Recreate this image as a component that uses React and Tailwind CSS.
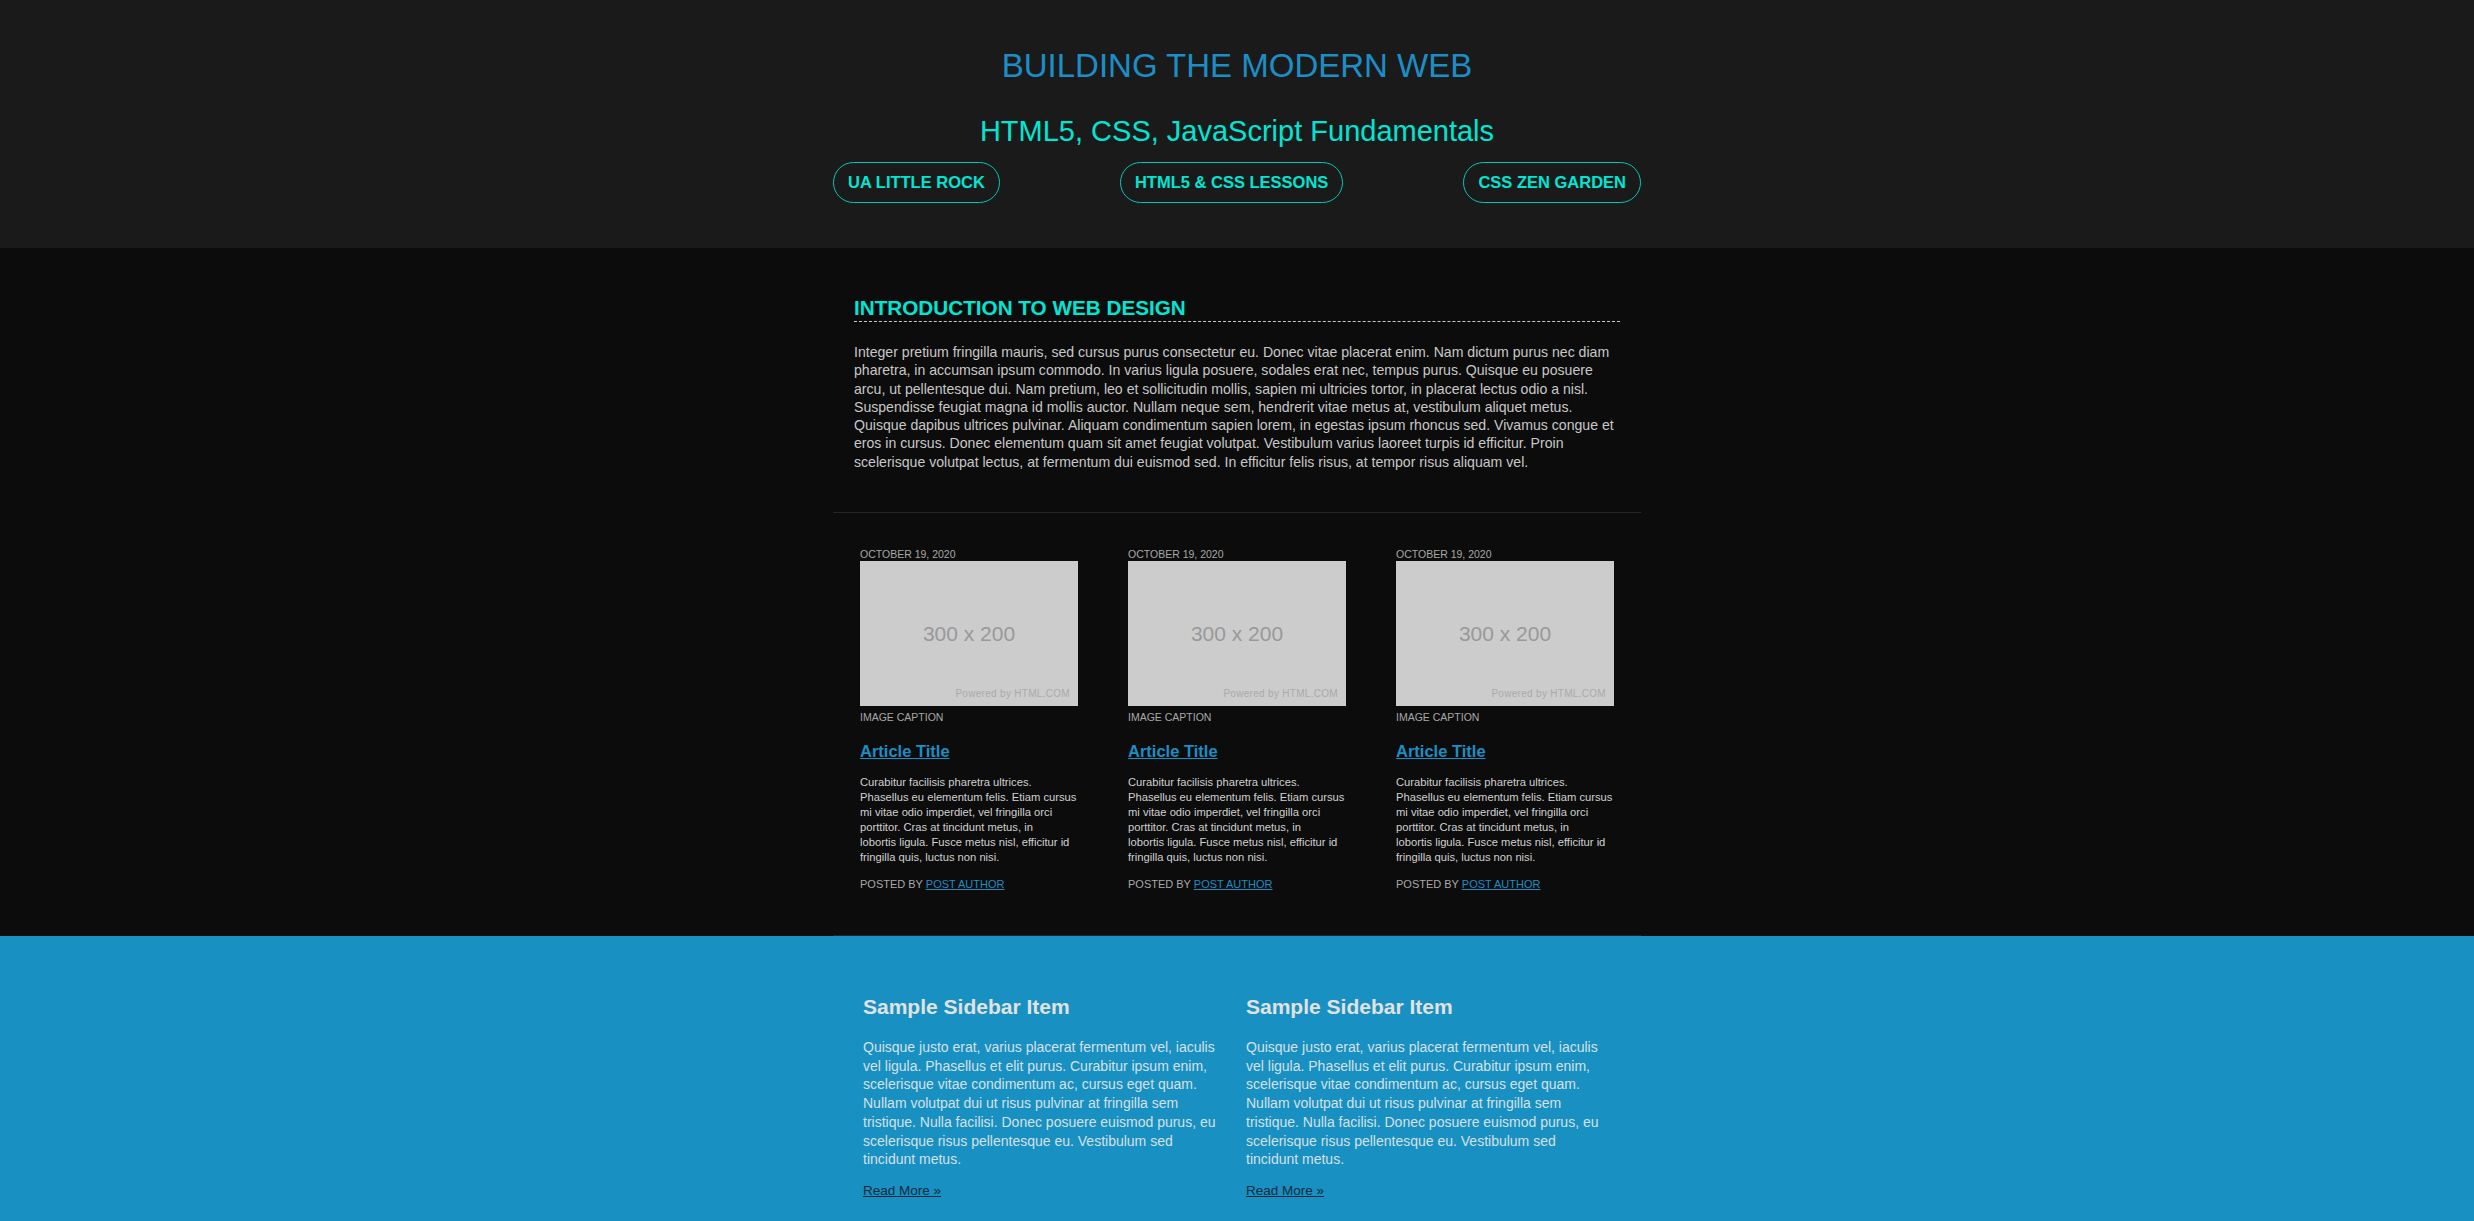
import React from 'react';

// line breaks follow the reference
const intro = [
  'Integer pretium fringilla mauris, sed cursus purus consectetur eu. Donec vitae placerat enim. Nam dictum purus nec diam',
  'pharetra, in accumsan ipsum commodo. In varius ligula posuere, sodales erat nec, tempus purus. Quisque eu posuere',
  'arcu, ut pellentesque dui. Nam pretium, leo et sollicitudin mollis, sapien mi ultricies tortor, in placerat lectus odio a nisl.',
  'Suspendisse feugiat magna id mollis auctor. Nullam neque sem, hendrerit vitae metus at, vestibulum aliquet metus.',
  'Quisque dapibus ultrices pulvinar. Aliquam condimentum sapien lorem, in egestas ipsum rhoncus sed. Vivamus congue et',
  'eros in cursus. Donec elementum quam sit amet feugiat volutpat. Vestibulum varius laoreet turpis id efficitur. Proin',
  'scelerisque volutpat lectus, at fermentum dui euismod sed. In efficitur felis risus, at tempor risus aliquam vel.',
];

const articleBody = [
  'Curabitur facilisis pharetra ultrices.',
  'Phasellus eu elementum felis. Etiam cursus',
  'mi vitae odio imperdiet, vel fringilla orci',
  'porttitor. Cras at tincidunt metus, in',
  'lobortis ligula. Fusce metus nisl, efficitur id',
  'fringilla quis, luctus non nisi.',
];

const sidebarBody = [
  'Quisque justo erat, varius placerat fermentum vel, iaculis',
  'vel ligula. Phasellus et elit purus. Curabitur ipsum enim,',
  'scelerisque vitae condimentum ac, cursus eget quam.',
  'Nullam volutpat dui ut risus pulvinar at fringilla sem',
  'tristique. Nulla facilisi. Donec posuere euismod purus, eu',
  'scelerisque risus pellentesque eu. Vestibulum sed',
  'tincidunt metus.',
];

const navLinks = ['UA LITTLE ROCK', 'HTML5 & CSS LESSONS', 'CSS ZEN GARDEN'];

const Lines = ({ lines }) =>
  lines.map((l, i) => (
    <React.Fragment key={i}>
      {l}
      {i < lines.length - 1 && <br />}
    </React.Fragment>
  ));

const Article = () => (
  <article className="w-[218px]">
    <div className="text-[10.5px] leading-[13px] text-[#a8a8a8] uppercase">October 19, 2020</div>
    {/* placeholder image */}
    <div className="relative w-[218px] h-[145px] bg-[#cccccc] flex items-center justify-center">
      <span className="text-[21px] text-[#999999]">300 x 200</span>
      <span className="absolute right-[8px] bottom-[5px] text-[10px] tracking-[0.3px] text-[#aaaaaa]">
        Powered by HTML.COM
      </span>
    </div>
    <div className="mt-[5px] text-[10.5px] leading-[13px] text-[#a8a8a8] uppercase">Image Caption</div>
    <h3 className="mt-[17px] text-[16.5px] leading-[20px] font-bold">
      <a href="#" className="text-[#1b8ec6] underline">Article Title</a>
    </h3>
    <p className="mt-[14px] whitespace-nowrap text-[11.2px] leading-[15px] text-[#d0d0d0]">
      <Lines lines={articleBody} />
    </p>
    <div className="mt-[13px] text-[11px] leading-[13px] text-[#a8a8a8] uppercase">
      Posted by <a href="#" className="text-[#1b8ec6] underline">Post Author</a>
    </div>
  </article>
);

const SidebarItem = () => (
  <div className="w-[357px]">
    <h3 className="text-[21px] leading-[26px] font-bold text-[#e2e2e2]">Sample Sidebar Item</h3>
    <p className="mt-[18px] whitespace-nowrap text-[14px] leading-[18.7px] text-[#d6e0e6]">
      <Lines lines={sidebarBody} />
    </p>
    <a href="#" className="inline-block mt-[13px] text-[13.5px] leading-[18px] text-[#0d2a3d] underline">
      Read More »
    </a>
  </div>
);

export default function App() {
  return (
    <div className="min-h-screen bg-[#1890c2] font-['Liberation_Sans',Arial,sans-serif]">
      {/* Header */}
      <header className="h-[248px] bg-[#1b1a1b] flex flex-col items-center">
        <h1 className="pt-[46px] text-[33px] leading-[40px] text-[#1b8ec6]">BUILDING THE MODERN WEB</h1>
        <h2 className="mt-[27px] text-[29px] leading-[36px] text-[#00e6d3]">HTML5, CSS, JavaScript Fundamentals</h2>
        <nav className="mt-[13px] w-[808px] flex justify-between">
          {navLinks.map((l) => (
            <a
              key={l}
              href="#"
              className="h-[41px] px-[14px] flex items-center rounded-full border border-[#00c9b7] text-[16.5px] font-bold text-[#00e6d3]"
            >
              {l}
            </a>
          ))}
        </nav>
      </header>

      {/* Main */}
      <div className="bg-[#0c0c0c]">
        <main className="w-[808px] mx-auto">
          <section className="pt-[48px] px-[21px] pb-[41px]">
            <h2 className="pb-px text-[20.7px] leading-[24px] font-bold text-[#00e6d3] border-b border-dashed border-[#c8c8c8]">
              INTRODUCTION TO WEB DESIGN
            </h2>
            <p className="mt-[21px] whitespace-nowrap text-[14.1px] leading-[18.3px] text-[#c8c8c8]">
              <Lines lines={intro} />
            </p>
          </section>
          <section className="border-t border-b border-[#262626] px-[27px] pt-[35px] pb-[44px] flex gap-[50px]">
            <Article />
            <Article />
            <Article />
          </section>
        </main>
      </div>

      {/* Sidebar / footer */}
      <aside className="bg-[#1890c2]">
        <div className="w-[808px] mx-auto pl-[30px] pt-[58px] pb-[40px] flex gap-[26px]">
          <SidebarItem />
          <SidebarItem />
        </div>
      </aside>
    </div>
  );
}
